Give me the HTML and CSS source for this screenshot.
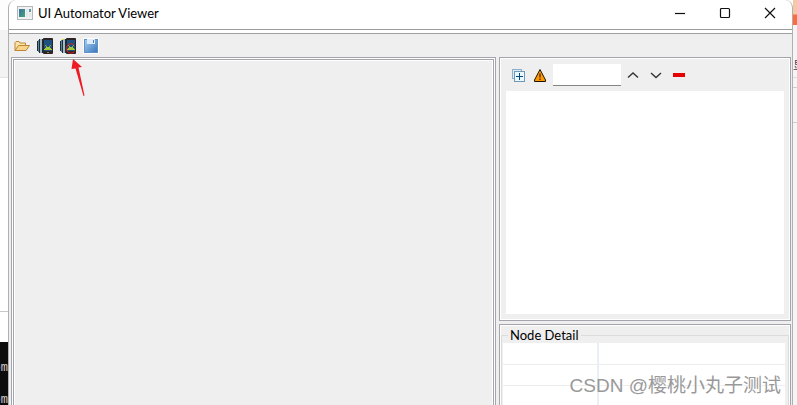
FILE: index.html
```html
<!DOCTYPE html>
<html lang="en">
<head>
<meta charset="utf-8">
<title>UI Automator Viewer</title>
<link rel="stylesheet" href="styles.css">
</head>
<body>
<div class="desktop">
  <div class="behind-left">
    <div class="pane-top"></div>
    <div class="pane-bar"></div>
    <div class="pane-page"></div>
    <div class="pane-foot"></div>
    <div class="console"><span>om</span><span>om</span></div>
  </div>

  <main class="window">
    <header class="titlebar">
      <svg class="app-icon" width="16" height="14" viewBox="0 0 16 14" aria-hidden="true">
        <defs><linearGradient id="screen" x1="0" y1="0" x2="1" y2="1"><stop offset="0" stop-color="#3b6fa5"/><stop offset="1" stop-color="#43a573"/></linearGradient></defs>
        <rect x=".5" y=".5" width="15" height="13" fill="#f2f2f2" stroke="#b5b8bb"/>
        <rect x="2" y="3" width="6" height="8" fill="url(#screen)"/>
        <rect x="9" y="3" width="2" height="8" fill="#dfe8ec"/>
        <rect x="12" y="3" width="2" height="3" fill="#5f9aa0"/>
        <rect x="12" y="7" width="2" height="4" fill="#e3e8e6"/>
      </svg>
      <h1>UI Automator Viewer</h1>
      <div class="window-buttons">
        <button type="button" aria-label="Minimize"><svg width="12" height="12" viewBox="0 0 12 12"><path d="M1 6.500h10"/></svg></button>
        <button type="button" aria-label="Maximize"><svg width="12" height="12" viewBox="0 0 12 12"><rect x="1.500" y="1.500" width="9" height="9" rx="1"/></svg></button>
        <button type="button" aria-label="Close"><svg width="12" height="12" viewBox="0 0 12 12"><path d="M1 1l10 10M11 1L1 11"/></svg></button>
      </div>
    </header>

    <div class="client">
      <nav class="toolbar" aria-label="Tools">
        <button type="button" aria-label="Open">
          <svg width="16" height="16" viewBox="0 0 16 16">
            <path d="M1 12.500V4.500l1-1h3l1 1.500h5.500v3" fill="#fbe3a8" stroke="#bd8636"/>
            <path d="M1 12.500L4.500 7.500h11L12 12.500z" fill="#f8d48a" stroke="#bd8636" stroke-linejoin="round"/>
          </svg>
        </button>
        <button type="button" aria-label="Device screenshot">
          <svg width="16" height="16" viewBox="0 0 16 16">
            <path d="M.5 3v10M2.500 1v14M5.500 1v14" stroke="#1b2f3a"/>
            <path d="M1.500 2v12M4 1v14" stroke="#5b8296"/>
            <path d="M3.500 1v14" stroke="#a9bcc4" stroke-width=".6"/>
            <rect x="6" y="0" width="10" height="16" rx="1" fill="#2b2625"/>
            <rect x="7" y="2" width="8" height="11" fill="#1d5280"/>
            <path d="M7 12v-1h1v-1h1V9h4v1h1v1h1v1z" fill="#a5c936"/>
            <path d="M8 7h1v1H8zM13 7h1v1h-1zM9 8h1v1H9zM12 8h1v1h-1z" fill="#86ac42"/>
            <path d="M10 14.500h2" stroke="#a87954"/>
          </svg>
        </button>
        <button type="button" aria-label="Device screenshot with compressed hierarchy">
          <svg width="16" height="16" viewBox="0 0 16 16">
            <path d="M.5 3v10M2.500 1v14M5.500 1v14" stroke="#1b2f3a"/>
            <path d="M1.500 2v12M4 1v14" stroke="#5b8296"/>
            <path d="M3.500 1v14" stroke="#a9bcc4" stroke-width=".6"/>
            <path d="M2 1.500h2" stroke="#e5d63b"/>
            <rect x="6" y="0" width="10" height="16" rx="1" fill="#2b2625"/>
            <rect x="7" y="2" width="8" height="11" fill="#1d5280"/>
            <path d="M7 12v-1h1v-1h1V9h4v1h1v1h1v1z" fill="#a5c936"/>
            <path d="M8 7h1v1H8zM13 7h1v1h-1zM9 8h1v1H9zM12 8h1v1h-1z" fill="#86ac42"/>
            <path d="M13.500 6.500A4.700 4.700 0 1 0 14.500 13.500" fill="none" stroke="#e51b23"/>
          </svg>
        </button>
        <button type="button" aria-label="Save">
          <svg width="16" height="16" viewBox="0 0 16 16">
            <defs><linearGradient id="disk" x1="0" y1="0" x2="1" y2="1"><stop offset="0" stop-color="#a9cff2"/><stop offset="1" stop-color="#3775bb"/></linearGradient></defs>
            <rect width="16" height="16" fill="#fff"/>
            <rect x="1.500" y="1.500" width="13" height="13" fill="url(#disk)" stroke="#5d91c8"/>
            <rect x="4" y="1" width="8" height="5" fill="#dcecfa"/><path d="M10.500 2v3" stroke="#4d83bd"/>
          </svg>
        </button>
      </nav>
      <svg class="pointer" width="16" height="40" viewBox="0 0 16 40" aria-hidden="true"><path d="M3 1l9 8-3.500.5L14.500 37.500 13.500 38 5.500 10.500 1.500 11z" fill="#ed1c24"/></svg>

      <div class="split">
        <section class="panel preview" aria-label="Screenshot"></section>
        <div class="side">
          <section class="panel hierarchy" aria-label="Hierarchy">
            <div class="treebar">
              <button type="button" aria-label="Expand All"><svg width="14" height="14" viewBox="0 0 14 14"><rect x="1.500" y="1.500" width="9" height="9" fill="#dcecf4" stroke="#8ab0cb"/><rect x="3.500" y="3.500" width="10" height="10" fill="#e8f8ff" stroke="#7298b5"/><path d="M5 8.500h7M8.500 5v7" stroke="#08467e"/></svg></button>
              <button type="button" aria-label="Toggle NAF Nodes"><svg width="12" height="14" viewBox="0 0 12 14"><path d="M6 1.500L11.500 12v1.500H.5V12z" fill="#ff9800" stroke="#201400"/><path d="M6 5.500v4M6 10.500v1.500" stroke="#3d2000" stroke-width="1.200"/></svg></button>
              <input type="text" aria-label="Search">
              <button type="button" aria-label="Previous"><svg width="12" height="12" viewBox="0 0 12 12"><path class="chevron" d="M1 8.500l5-4.500 5 4.500"/></svg></button>
              <button type="button" aria-label="Next"><svg width="12" height="12" viewBox="0 0 12 12"><path class="chevron" d="M1 4l5 4.500L11 4"/></svg></button>
              <button type="button" aria-label="Clear"><svg width="12" height="12" viewBox="0 0 12 12"><path d="M0 4h12v4H0z" fill="#e60000"/></svg></button>
            </div>
            <div class="tree"></div>
          </section>
          <section class="panel detail">
            <fieldset>
              <legend>Node Detail</legend>
              <table aria-label="Node Detail">
                <tbody>
                  <tr><td class="key"></td><td></td></tr>
                  <tr><td class="key"></td><td></td></tr>
                  <tr><td class="key"></td><td></td></tr>
                </tbody>
              </table>
            </fieldset>
          </section>
        </div>
      </div>
    </div>
  </main>

  <div class="behind-right">
    <div class="banner"></div>
    <div class="strip">显</div>
    <div class="strip-line"></div>
    <div class="strip-line tall"></div>
  </div>
  <div class="watermark">CSDN @樱桃小丸子测试</div>
</div>
</body>
</html>
```
FILE: styles.css
```css
* { box-sizing: border-box; }

body {
  margin: 0;
  overflow: hidden;
  background: #fff;
  color: #000;
  font: 13px/16px Lato, "Noto Sans CJK SC", sans-serif;
}

.desktop {
  position: relative;
  display: grid;
  grid-template-columns: 8px minmax(0, 1fr) 4px;
  grid-template-rows: minmax(0, 1fr);
  height: 100vh;
  overflow: hidden;
}

button {
  display: grid;
  place-items: center;
  padding: 0;
  border: 0;
  background: none;
}

svg { display: block; }

.behind-left { display: flex; flex-direction: column; overflow: hidden; }
.pane-top { height: 30px; background: #fdfdfd; }
.pane-bar { height: 48px; background: #f3f3f3; border-bottom: 1px solid #e4e4e4; }
.pane-page { height: 234px; border-bottom: 1px solid #c8c8c8; }
.pane-foot { height: 30px; }
.console {
  flex: 1;
  display: flex;
  flex-direction: column;
  align-items: flex-end;
  gap: 16px;
  min-height: 0;
  padding-top: 18px;
  background: #0c0c0c;
  color: #ccc;
  font: 12px/16px "Liberation Mono", monospace;
}

.window {
  display: flex;
  flex-direction: column;
  min-width: 0;
  overflow: hidden;
  background: #fff;
  border: solid #b0b0b0;
  border-width: 0 1px;
  border-radius: 8px 8px 0 0;
}

.titlebar {
  display: flex;
  align-items: center;
  height: 30px;
  padding: 0 0 4px 8px;
  border-bottom: 1px solid #999c9a;
}
.titlebar h1 { margin: 0 0 0 5px; font-size: 13px; font-weight: 400; }
.window-buttons { display: flex; margin-left: auto; }
.window-buttons button { width: 45px; height: 26px; }
.window-buttons path,
.window-buttons rect { fill: none; stroke: #111; stroke-width: 1.2; }

.client {
  flex: 1;
  display: flex;
  flex-direction: column;
  position: relative;
  min-height: 0;
  margin-top: 3px;
  padding: 0 1px 0 2px;
  background: #efefef;
  border: solid #a0a0a4;
  border-width: 1px 0 0;
}

.toolbar { display: flex; gap: 7px; height: 23px; padding: 0 3px; }
.toolbar button { width: 16px; }

.pointer { position: absolute; left: 61px; top: 24px; z-index: 2; }

.split {
  flex: 1;
  display: grid;
  grid-template-columns: 485fr 292fr;
  grid-template-rows: minmax(0, 1fr);
  gap: 3px;
  min-height: 0;
  margin-bottom: -4px;
}

.panel {
  background: #efefef;
  border: 1px solid #a4a5ac;
  box-shadow: inset 0 0 0 1px #fff;
}
.preview { box-shadow: inset 0 0 0 1px #fff, inset 0 0 0 2px #a4a5ac, inset 0 0 0 3px #fff; }

.side { display: flex; flex-direction: column; gap: 3px; min-height: 0; }

.hierarchy { display: flex; flex: none; flex-direction: column; height: 264px; padding: 6px; }
.treebar { display: flex; align-items: center; gap: 10px; height: 22px; margin-bottom: 5px; padding-left: 5px; }
.treebar input {
  width: 68px;
  height: 22px;
  margin: 0 -4px 0 -3px;
  padding: 0 4px;
  background: #fff;
  border: 0;
  border-bottom: 1px solid #858585;
  font: inherit;
}
.treebar button:first-child { margin-right: -1px; }
.treebar input ~ button { margin-right: 1px; }
.chevron { fill: none; stroke: #333; stroke-width: 1.4; }
.tree { flex: 1; background: #fff; }

.detail { flex: 1; padding: 2px 1px 0; min-height: 0; overflow: hidden; }
fieldset {
  min-width: 0;
  height: 100%;
  margin: 0;
  padding: 0 3px 0 1px;
  border: 1px solid #dcdcdc;
  border-bottom: 0;
  overflow: hidden;
}
legend { margin-left: 5px; padding: 0 2px; }
table { width: 100%; border-collapse: collapse; background: #fff; }
td { height: 21px; padding: 0; border-bottom: 1px solid #ededed; }
.key { width: 95px; border-right: 2px solid #eaeff5; }

.behind-right { overflow: hidden; background: #f5f5f8; }
.banner { height: 25px; background: linear-gradient(#f4c9a4 0 14px, #fa6c42 15px); }
.strip { height: 53px; padding-top: 33px; border-bottom: 1px solid #ddd; font-size: 12px; color: #445; }
.strip-line { height: 10px; border-bottom: 1px solid #ccc; }
.tall { height: 35px; }

.watermark {
  position: absolute;
  right: 16px;
  bottom: 6px;
  color: #999;
  font: 19px/26px "Liberation Sans", "Noto Sans CJK SC", sans-serif;
  text-shadow: 1px 1px 0 #fff;
}
```
